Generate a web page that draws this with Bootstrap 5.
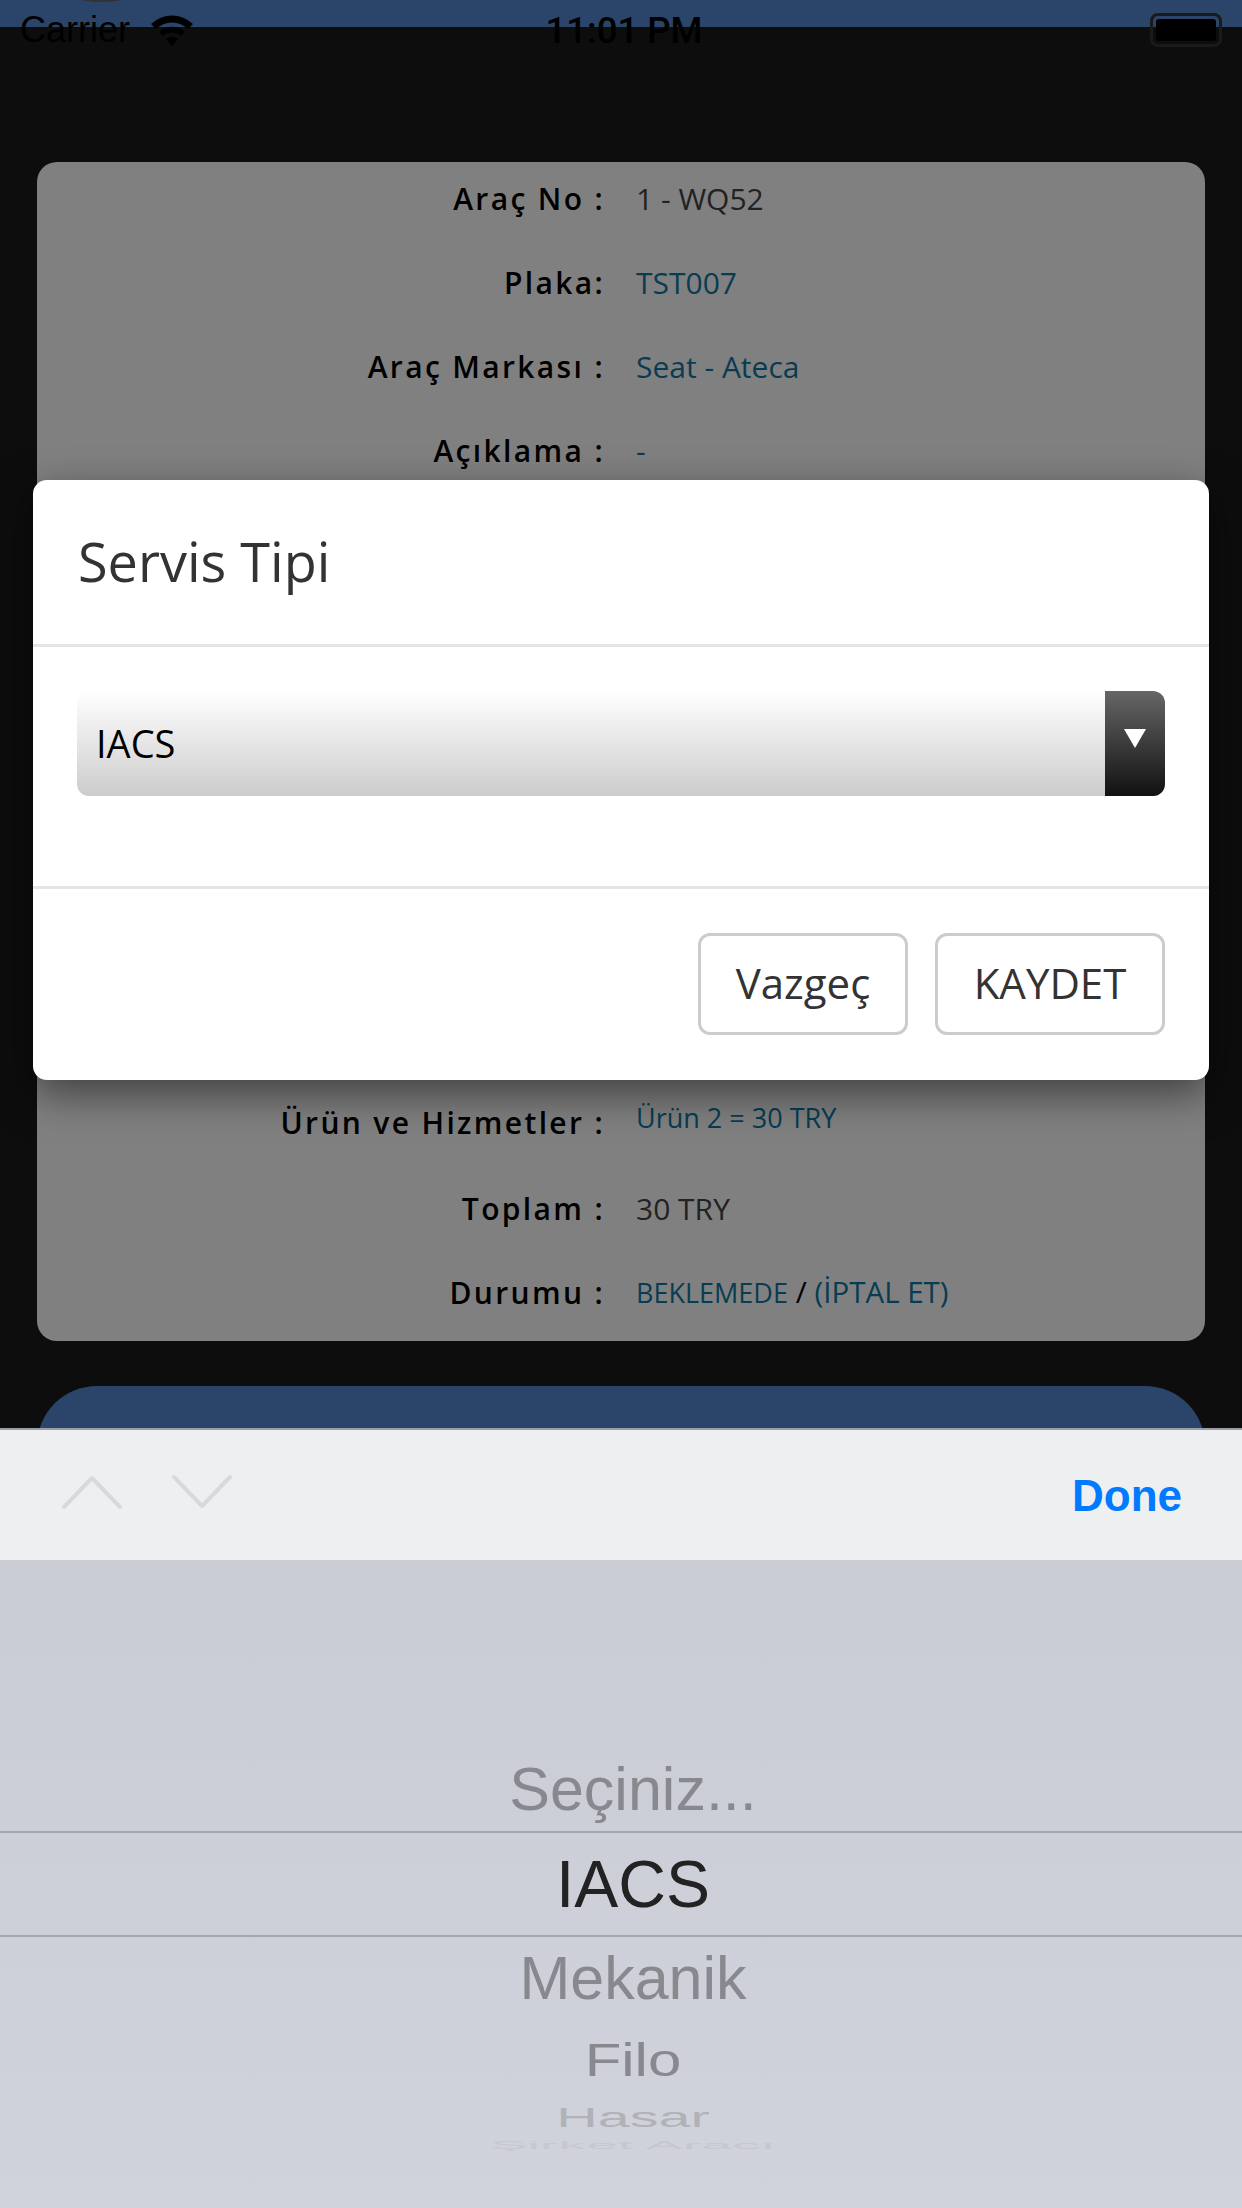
<!DOCTYPE html>
<html lang="tr">
<head>
  <meta charset="UTF-8">
  <meta name="viewport" content="width=device-width, initial-scale=1.0">
  <title>Servis Tipi</title>
  <link href="https://cdn.jsdelivr.net/npm/bootstrap@5.3.0/dist/css/bootstrap.min.css" rel="stylesheet">
  <style>
    html, body { height: 2208px; overflow: hidden; }
    body { background: #0d0d0d; font-family: "Open Sans", sans-serif; position: relative; }

    /* status bar */
    .top-strip { height: 27px; background: #2a4569; }
    .status-row { position: absolute; top: 0; left: 0; right: 0; height: 60px; padding: 0 20px; color: #000; font-family: "Liberation Sans", sans-serif; font-size: 36px; }
    .status-left { height: 60px; gap: 20px; }
    .status-time { position: absolute; left: 0; right: 0; top: 9px; text-align: center; padding-left: 6px; font-family: Roboto, sans-serif; font-weight: 500; font-size: 36.5px; line-height: 44px; }
    .notch-blob { position: absolute; top: -6px; left: 78px; width: 46px; height: 8px; border-radius: 50%; background: #333; }
    .battery-box { position: absolute; right: 20px; top: 13px; width: 72px; height: 34px; border: 3px solid #1a1a1a; border-radius: 8px; padding: 3px; }
    .battery-box span { display: block; width: 100%; height: 100%; background: #000; border-radius: 3px; }

    /* page behind the dialog */
    .page-area { height: 1401px; padding: 135px 37px 0; overflow: hidden; }
    .info-box { height: 1179px; background: #808080; border: 0; border-radius: 20px; }
    .info-row { height: 84px; align-items: center; font-size: 30px; color: #222; }
    .info-row:first-child { height: 78px; padding-bottom: 6px; }
    .info-label { color: #000; font-weight: 600; letter-spacing: 2.35px; }
    .info-val { color: #083c52; padding-left: 15px; }
    .info-plain { color: #222; padding-left: 15px; }
    .small-val { font-size: 27px; }
    .cancel-val { font-size: 29.5px; }
    .val-up { margin-top: -8px; }
    .tall-row { margin-bottom: 2px; }
    .hidden-gap { height: 588px; }
    .blue-btn { height: 120px; margin-top: 45px; background: #2a4569; border-radius: 60px 60px 0 0; }

    /* dialog */
    .dialog-wrap { position: absolute; top: 480px; left: 33px; width: 1176px; }
    .dialog-wrap .modal-content { height: 600px; background: #fff; border: 0; border-radius: 14px; box-shadow: 0 14px 42px rgba(0,0,0,.5); color: #333; }
    .dialog-wrap .modal-header { height: 167px; padding: 0 45px; border-bottom: 3px solid #e5e5e5; }
    .dialog-wrap .modal-title { font-size: 54px; font-weight: 400; line-height: 1; margin-top: -3px; }
    .dialog-wrap .modal-body { height: 239px; flex: none; padding: 44px 44px 0; }
    .dialog-wrap .modal-footer { height: 194px; padding: 44px 44px 0 0; border-top: 3px solid #e5e5e5; align-items: flex-start; gap: 27px; }
    .gradient-select { height: 105px; border-radius: 12px; background: linear-gradient(#fff, #ccc); overflow: hidden; font-size: 38px; color: #000; padding-left: 19px; }
    .select-arrow { width: 60px; background: linear-gradient(#666, #111); }
    .select-arrow svg { display: block; margin: 38px auto 0; }
    .dialog-btn { height: 102px; font-size: 42px; color: #333; background: #fff; border: 3px solid #ccc; border-radius: 12px; margin: 0; padding: 0 0 3px; }
    .btn-cancel { width: 210px; }
    .btn-save { width: 230px; }

    /* keyboard */
    .kb-bar { height: 132px; background: #eeeff1; border-top: 2px solid #9a9ea6; padding: 0 60px 0 62px; }
    .kb-done { color: #007aff; font-family: "Liberation Sans", sans-serif; font-weight: 700; font-size: 44px; margin-top: 1px; }
    .kb-arrows { gap: 50px; }
    .kb-arrows svg { display: block; margin-top: -7px; }
    .picker-area { height: 648px; background: linear-gradient(#c9ccd4, #d0d3db); font-family: "Liberation Sans", sans-serif; text-align: center; padding-top: 185px; padding-left: 24px; overflow: hidden; }
    .pick-item { display: flex; align-items: center; justify-content: center; line-height: 1; color: #87898e; }
    .pick-prev { height: 86px; font-size: 61px; padding-top: 2px; }
    .pick-cur { height: 106px; font-size: 66px; color: #222; border-top: 2px solid #a4a6ab; border-bottom: 2px solid #a4a6ab; margin-left: -24px; padding-left: 24px; }
    .pick-next { height: 82px; font-size: 61px; }
    .pick-far { height: 82px; font-size: 50px; transform: scale(1.2, .92); }
    .pick-far2 { height: 32px; font-size: 46px; color: #b0b2b8; transform: scale(1.25, .62); }
    .pick-far3 { height: 24px; font-size: 38px; color: #c6c8ce; transform: scale(1.47, .3); }
  </style>
</head>
<body>
  <div class="top-strip"></div>

  <div class="page-area">
    <div class="card info-box">
      <div class="row g-0 info-row">
        <div class="col-6 text-end pe-3 info-label">Araç No :</div>
        <div class="col-6 info-plain">1 - WQ52</div>
      </div>
      <div class="row g-0 info-row">
        <div class="col-6 text-end pe-3 info-label">Plaka:</div>
        <div class="col-6 info-val">TST007</div>
      </div>
      <div class="row g-0 info-row">
        <div class="col-6 text-end pe-3 info-label">Araç Markası :</div>
        <div class="col-6 info-val">Seat - Ateca</div>
      </div>
      <div class="row g-0 info-row">
        <div class="col-6 text-end pe-3 info-label">Açıklama :</div>
        <div class="col-6 info-val">-</div>
      </div>
      <div class="hidden-gap"></div>
      <div class="row g-0 info-row tall-row">
        <div class="col-6 text-end pe-3 info-label">Ürün ve Hizmetler :</div>
        <div class="col-6 info-val small-val val-up">Ürün 2 = 30 TRY</div>
      </div>
      <div class="row g-0 info-row">
        <div class="col-6 text-end pe-3 info-label">Toplam :</div>
        <div class="col-6 info-plain">30 TRY</div>
      </div>
      <div class="row g-0 info-row">
        <div class="col-6 text-end pe-3 info-label">Durumu :</div>
        <div class="col-6 info-val"><span class="small-val">BEKLEMEDE</span> <span class="text-black">/</span> <span class="cancel-val">(İPTAL ET)</span></div>
      </div>
    </div>
    <div class="blue-btn"></div>
  </div>

  <div class="kb-bar d-flex align-items-center justify-content-between">
    <div class="kb-arrows d-flex">
      <svg width="60" height="34" viewBox="0 0 60 34" fill="none" stroke="#d8d9db" stroke-width="4" stroke-linecap="round" stroke-linejoin="round"><path d="M2 32 30 3 58 32"/></svg>
      <svg width="60" height="34" viewBox="0 0 60 34" fill="none" stroke="#d8d9db" stroke-width="4" stroke-linecap="round" stroke-linejoin="round"><path d="M2 2 30 31 58 2"/></svg>
    </div>
    <div class="kb-done">Done</div>
  </div>
  <div class="picker-area">
    <div class="pick-item pick-prev">Seçiniz...</div>
    <div class="pick-item pick-cur">IACS</div>
    <div class="pick-item pick-next">Mekanik</div>
    <div class="pick-item pick-far">Filo</div>
    <div class="pick-item pick-far2">Hasar</div>
    <div class="pick-item pick-far3">Şirket Aracı</div>
  </div>

  <div class="status-row">
    <span class="notch-blob"></span>
    <div class="status-left d-flex align-items-center">
      <span>Carrier</span>
      <svg width="44" height="32" viewBox="0 0 44 32"><path d="M22 32 28 25A9 9 0 0 0 16 25Z"/><path d="M13 22A13 13 0 0 1 31 22L35 18A19 19 0 0 0 9 18Z"/><path d="M6 15A23 23 0 0 1 38 15L43 10A30 30 0 0 0 1 10Z"/></svg>
    </div>
    <div class="status-time">11:01 PM</div>
    <div class="battery-box"><span></span></div>
  </div>

  <div class="dialog-wrap">
    <div class="modal-content">
      <div class="modal-header">
        <h5 class="modal-title">Servis Tipi</h5>
      </div>
      <div class="modal-body">
        <div class="gradient-select d-flex align-items-center justify-content-between">
          <span>IACS</span>
          <div class="select-arrow align-self-stretch">
            <svg width="22" height="19" viewBox="0 0 22 19"><path d="M0 0H22L11 19Z" fill="#fff"/></svg>
          </div>
        </div>
      </div>
      <div class="modal-footer">
        <button type="button" class="btn dialog-btn btn-cancel">Vazgeç</button>
        <button type="button" class="btn dialog-btn btn-save">KAYDET</button>
      </div>
    </div>
  </div>

  <script src="https://cdn.jsdelivr.net/npm/bootstrap@5.3.0/dist/js/bootstrap.bundle.min.js"></script>
</body>
</html>
